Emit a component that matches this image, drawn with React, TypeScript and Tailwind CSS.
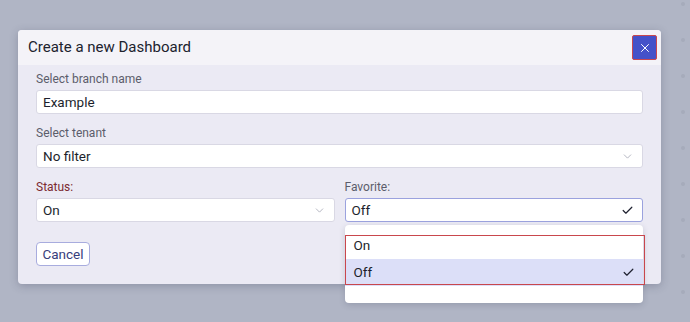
import { X, ChevronDown, Check } from "lucide-react";

const font = { fontFamily: 'Roboto, "Noto Sans", sans-serif' };

const Field = ({
  label,
  value,
  labelClass = "text-[#5b5d6b]",
  focused = false,
  icon = "chevron",
}: {
  label: string;
  value: string;
  labelClass?: string;
  focused?: boolean;
  icon?: "chevron" | "check" | "none";
}) => (
  <div className="flex flex-col">
    <div className={`h-[16px] text-[12px] leading-[16px] ${labelClass}`}>{label}</div>
    <div
      className={`mt-[3px] h-[24px] flex items-center justify-between pl-[6px] pr-[8px] bg-white rounded-[3px] border ${
        focused ? "border-[#9ba2de]" : "border-[#d9d8e4]"
      }`}
    >
      <span className="text-[13.5px] text-[#1d1f2c]">{value}</span>
      {icon === "chevron" && <ChevronDown className="w-[13px] h-[13px] text-[#a4a6b4]" strokeWidth={1.5} />}
      {icon === "check" && <Check className="w-[13px] h-[13px] text-[#1f2130]" strokeWidth={2.2} />}
    </div>
  </div>
);

export default function App() {
  return (
    <div className="w-[690px] h-[322px] bg-[#b0b5c5] pt-[30px] pl-[18px] relative overflow-hidden" style={font}>
      {/* faint background content */}
      <div className="absolute right-[5px] top-0 flex flex-col gap-[32px] pt-[2px]">
        {[0, 1, 2, 3, 4, 5, 6, 7, 8, 9].map((i) => (
          <div key={i} className="w-[4px] h-[4px] rounded-full bg-[#a6abbb]" />
        ))}
      </div>

      <div className="relative w-[643px] rounded-[4px] bg-[#ebeaf4] shadow-[0_2px_8px_rgba(40,45,70,0.25)]">
        <div className="h-[35px] flex items-center justify-between pl-[10px] pr-[4px] bg-[#f4f3f8] rounded-t-[4px]">
          <span className="text-[15px] text-[#20222e]">Create a new Dashboard</span>
          <button className="w-[25px] h-[25px] flex items-center justify-center bg-[#4451c9] border border-[#c8474f] rounded-[2px]">
            <X className="w-[14px] h-[14px] text-white" strokeWidth={1.7} />
          </button>
        </div>

        <div className="px-[18px] pt-[6px] pb-[18px] flex flex-col">
          <Field label="Select branch name" value="Example" icon="none" />
          <div className="mt-[11px]">
            <Field label="Select tenant" value="No filter" />
          </div>
          <div className="mt-[11px] grid grid-cols-2 gap-[10px]">
            <Field label="Status:" value="On" labelClass="text-[#7c2a30]" />
            <div className="relative">
              <Field label="Favorite:" value="Off" focused icon="check" />
              <div className="absolute left-0 right-0 top-full mt-[3px] h-[78px] bg-white rounded-[4px] shadow-[0_2px_6px_rgba(40,45,70,0.18)] pt-[7px] z-10">
                <div className="h-[27px] flex items-center pl-[9px] text-[13.5px] text-[#1d1f2c]">On</div>
                <div className="h-[27px] flex items-center justify-between pl-[9px] pr-[8px] bg-[#dcdff8] text-[13.5px] text-[#1d1f2c]">
                  <span>Off</span>
                  <Check className="w-[13px] h-[13px] text-[#1f2130]" strokeWidth={2.2} />
                </div>
              </div>
              <div className="absolute left-0 right-[-2px] top-[calc(100%+13px)] h-[50px] border border-[#c9474d] z-20 pointer-events-none" />
            </div>
          </div>
          <div className="mt-[20px]">
            <button className="h-[24px] w-[54px] rounded-[4px] border border-[#a8acde] bg-white text-[13.5px] text-[#383e7c]">
              Cancel
            </button>
          </div>
        </div>
      </div>
    </div>
  );
}
